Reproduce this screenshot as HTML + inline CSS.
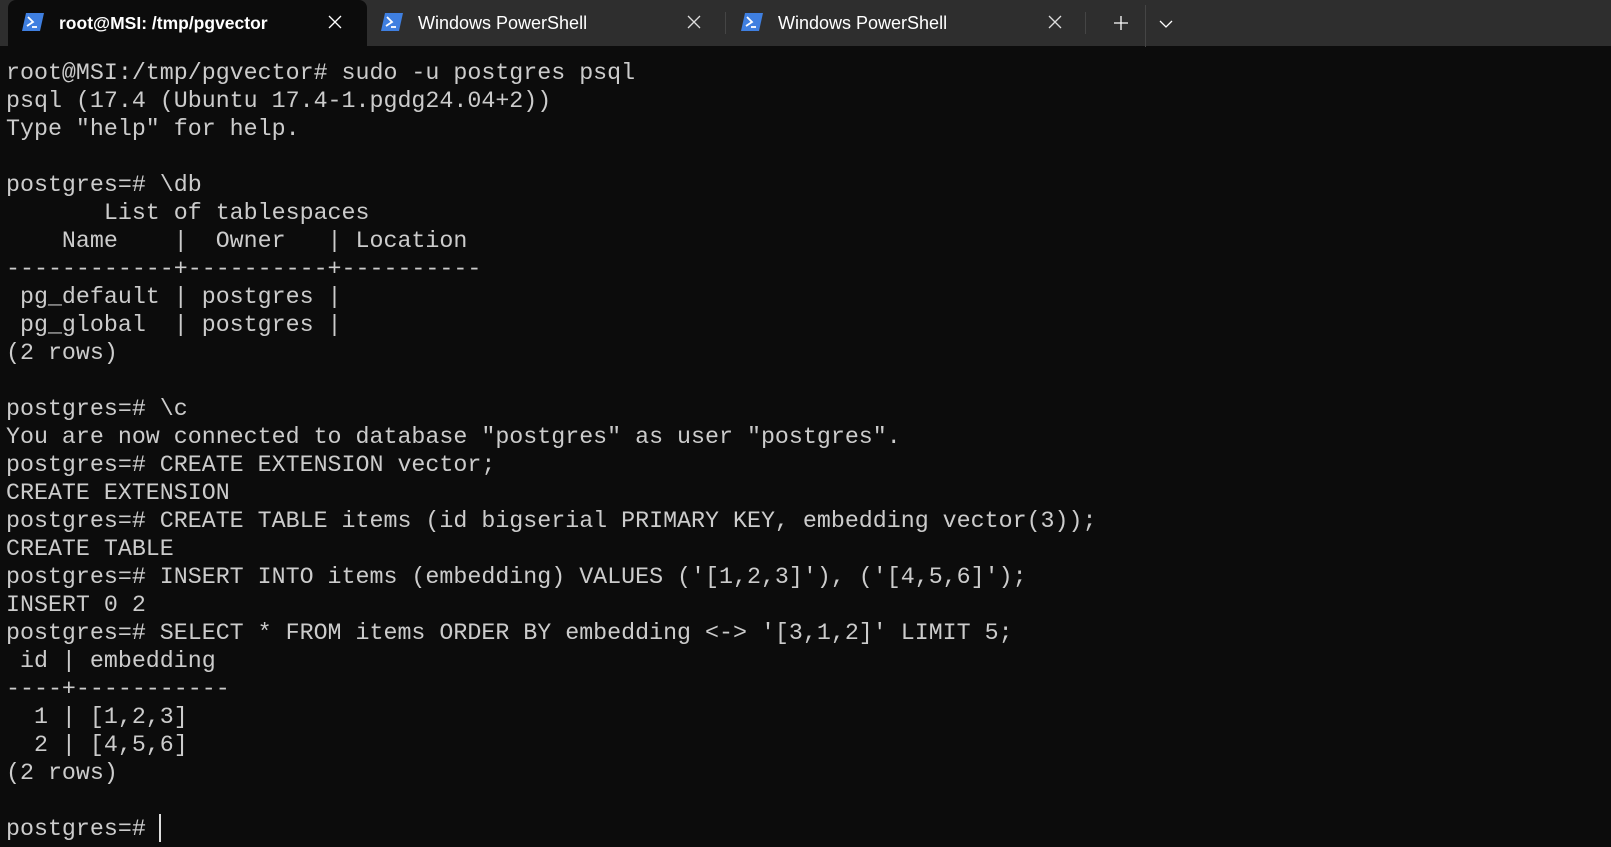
<!DOCTYPE html>
<html><head><meta charset="utf-8"><style>
html,body{margin:0;padding:0;width:1611px;height:847px;overflow:hidden;background:#0c0c0c}
.bar{position:absolute;left:0;top:0;width:1611px;height:46px;background:#2e2e2e}
.tab{position:absolute;top:0;height:46px;font-family:"Liberation Sans",sans-serif;font-size:18px;color:#fff}
.tab.active{background:#0c0c0c;border-radius:8px 8px 0 0;top:0;height:48px}
.tab.active .t{font-weight:bold;font-size:17.5px}
.tab .ico{position:absolute;left:14px;top:13px}
.tab .t{position:absolute;left:51px;top:13px;white-space:nowrap}
.tab .x{position:absolute;top:15px}
.sep{position:absolute;top:12px;width:1px;height:22px;background:#454545}
pre{position:absolute;left:6px;top:59px;margin:0;font-family:"Liberation Mono",monospace;font-size:23.3px;line-height:28px;color:#cccccc}
.cur{position:absolute;left:159px;top:814px;width:2px;height:28px;background:#ddd}
</style></head><body>
<div class="bar"></div>
<div class="tab active" style="left:8px;width:359px">
<svg class="ico" width="22" height="18" viewBox="0 0 22 18"><path d="M4 0H22L18 18H0Z" fill="#3f7fe0"/><path d="M6 4L11 9L5 13" stroke="#fff" stroke-width="1.8" fill="none"/><path d="M10 14H15" stroke="#fff" stroke-width="1.8"/></svg>
<span class="t">root@MSI: /tmp/pgvector</span>
<svg class="x" style="left:320px" width="14" height="14"><path d="M1 1L13 13M13 1L1 13" stroke="#fff" stroke-width="1.3"/></svg></div>
<div class="tab" style="left:367px;width:353px">
<svg class="ico" width="22" height="18" viewBox="0 0 22 18"><path d="M4 0H22L18 18H0Z" fill="#3f7fe0"/><path d="M6 4L11 9L5 13" stroke="#fff" stroke-width="1.8" fill="none"/><path d="M10 14H15" stroke="#fff" stroke-width="1.8"/></svg>
<span class="t">Windows PowerShell</span>
<svg class="x" style="left:320px" width="14" height="14"><path d="M1 1L13 13M13 1L1 13" stroke="#ddd" stroke-width="1.3"/></svg></div>
<div class="sep" style="left:725px"></div>
<div class="tab" style="left:727px;width:353px">
<svg class="ico" width="22" height="18" viewBox="0 0 22 18"><path d="M4 0H22L18 18H0Z" fill="#3f7fe0"/><path d="M6 4L11 9L5 13" stroke="#fff" stroke-width="1.8" fill="none"/><path d="M10 14H15" stroke="#fff" stroke-width="1.8"/></svg>
<span class="t">Windows PowerShell</span>
<svg class="x" style="left:321px" width="14" height="14"><path d="M1 1L13 13M13 1L1 13" stroke="#ddd" stroke-width="1.3"/></svg></div>
<div class="sep" style="left:1085px"></div>
<svg style="position:absolute;left:1113px;top:15px" width="16" height="16"><path d="M8 1V15M1 8H15" stroke="#fff" stroke-width="1.3"/></svg>
<div class="sep" style="left:1145px;top:5px;height:42px"></div>
<svg style="position:absolute;left:1159px;top:19px" width="14" height="10"><path d="M1 2L7 8L13 2" stroke="#fff" stroke-width="1.3" fill="none"/></svg>
<pre>root@MSI:/tmp/pgvector# sudo -u postgres psql
psql (17.4 (Ubuntu 17.4-1.pgdg24.04+2))
Type "help" for help.

postgres=# \db
       List of tablespaces
    Name    |  Owner   | Location
------------+----------+----------
 pg_default | postgres |
 pg_global  | postgres |
(2 rows)

postgres=# \c
You are now connected to database "postgres" as user "postgres".
postgres=# CREATE EXTENSION vector;
CREATE EXTENSION
postgres=# CREATE TABLE items (id bigserial PRIMARY KEY, embedding vector(3));
CREATE TABLE
postgres=# INSERT INTO items (embedding) VALUES ('[1,2,3]'), ('[4,5,6]');
INSERT 0 2
postgres=# SELECT * FROM items ORDER BY embedding &lt;-&gt; '[3,1,2]' LIMIT 5;
 id | embedding
----+-----------
  1 | [1,2,3]
  2 | [4,5,6]
(2 rows)

postgres=# </pre>
<div class="cur"></div>
</body></html>
